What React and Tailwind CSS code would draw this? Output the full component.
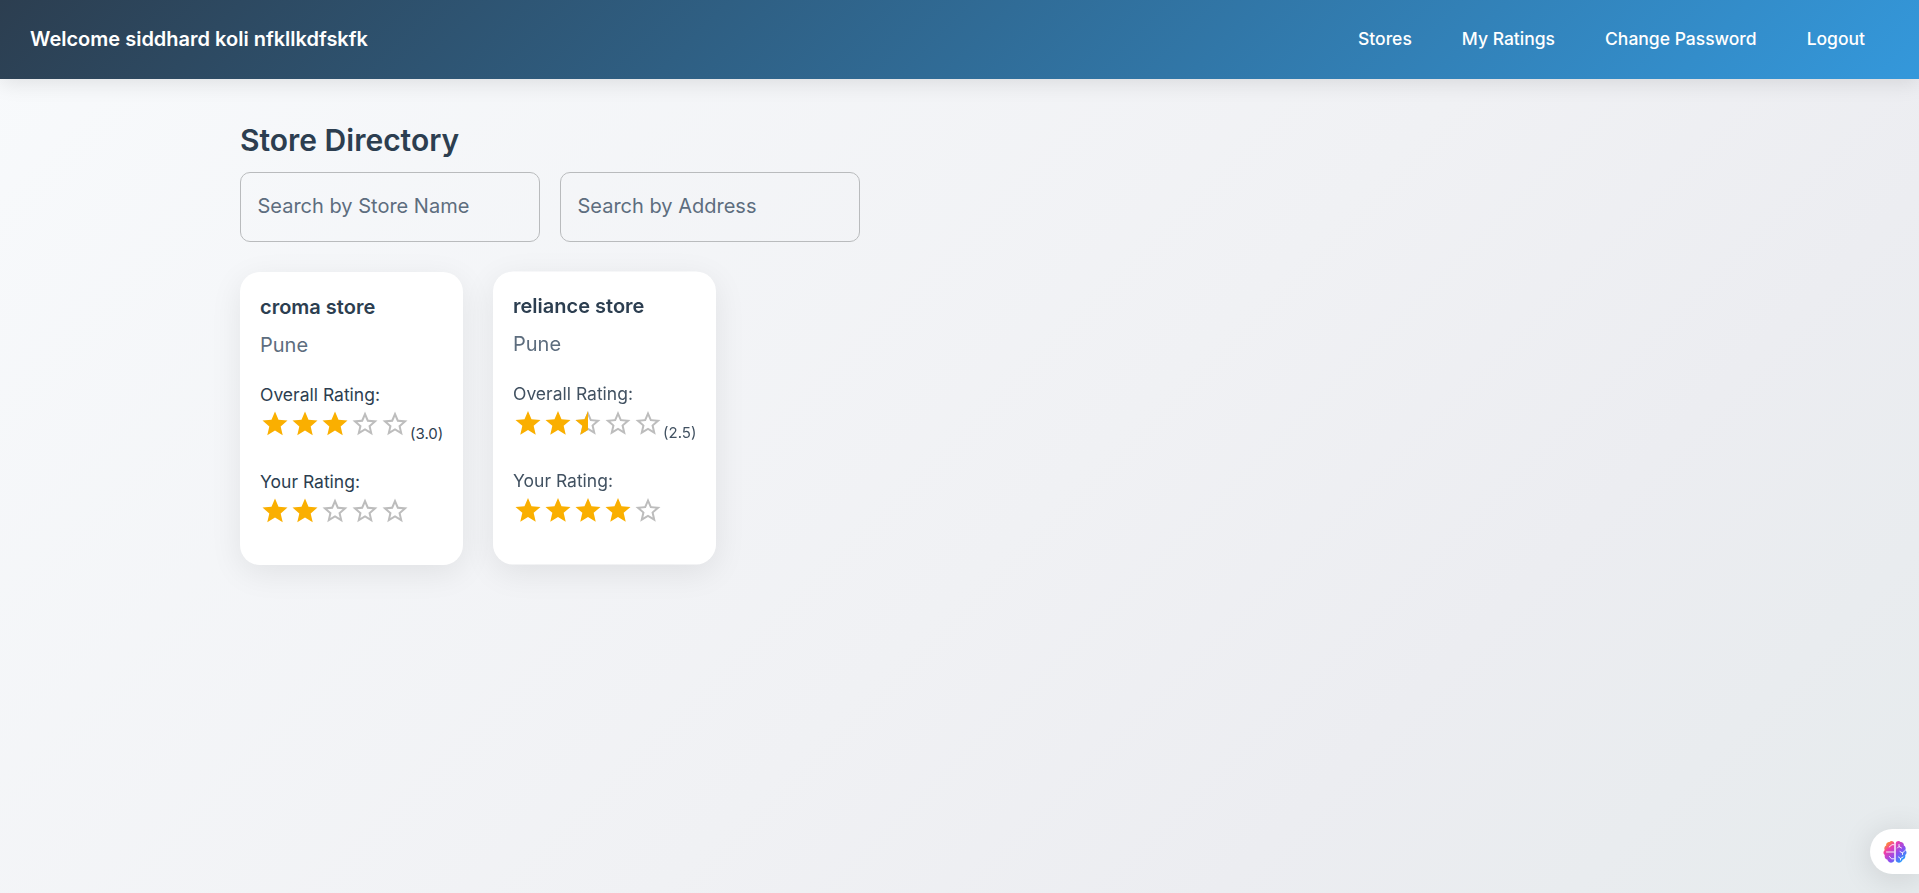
import React from 'react';

const STAR =
  'M12 17.27L18.18 21l-1.64-7.03L22 9.24l-7.19-.61L12 2 9.19 8.63 2 9.24l5.46 4.73L5.82 21z';
const STAR_BORDER =
  'M22 9.24l-7.19-.62L12 2 9.19 8.63 2 9.24l5.46 4.73L5.82 21 12 17.27 18.18 21l-1.63-7.03L22 9.24zM12 15.4l-3.76 2.27 1-4.28-3.32-2.88 4.38-.38L12 6.1l1.71 4.04 4.38.38-3.32 2.88 1 4.28L12 15.4z';

function Star({ fill }) {
  return (
    <svg viewBox="0 0 24 24" className="size-[30px] shrink-0">
      {fill < 1 && <path d={STAR_BORDER} className="fill-[#bdbdbd]" />}
      {fill === 1 && <path d={STAR} className="fill-[#faaf00]" />}
      {fill === 0.5 && (
        <svg x="0" y="0" width="12" height="24" viewBox="0 0 12 24">
          <path d={STAR} className="fill-[#faaf00]" />
        </svg>
      )}
    </svg>
  );
}

function Rating({ value }) {
  return (
    <div className="flex">
      {[0, 1, 2, 3, 4].map((i) => (
        <Star key={i} fill={Math.max(0, Math.min(1, value - i))} />
      ))}
    </div>
  );
}

function StoreCard({ name, city, overall, own, raised }) {
  return (
    <article
      className={`h-[293px] w-[223px] rounded-[20px] bg-white px-5 pt-[19px] shadow-[0_8px_32px_rgba(0,0,0,0.08)] ${
        raised ? '-translate-y-[0.6px] text-[#415161] will-change-transform' : 'text-[#2c3e50]'
      }`}
    >
      <h2 className="text-xl leading-8 font-semibold text-[#2c3e50]">{name}</h2>
      <p className="mt-[7px] text-xl leading-[30px] text-[#5d6d7e]">{city}</p>
      <p className="mt-[22px] text-[17.5px] leading-[26px]">Overall Rating:</p>
      <div className="mt-px flex h-[33px] items-start">
        <Rating value={overall} />
        <span className="mt-[13px] text-[15px] leading-6">({overall.toFixed(1)})</span>
      </div>
      <p className="mt-[27px] text-[17.5px] leading-[26px]">Your Rating:</p>
      <div className="mt-px">
        <Rating value={own} />
      </div>
    </article>
  );
}

function SearchField({ label }) {
  return (
    <input
      placeholder={label}
      className="h-[70px] w-[300px] rounded-[10px] border border-[#b9bbbd] bg-transparent px-[16.5px] pb-0.5 text-xl text-[#2c3e50] placeholder:text-[#5d6d7e]"
    />
  );
}

function BrainIcon() {
  return (
    <svg viewBox="0 0 24 24" className="size-6">
      <defs>
        <linearGradient id="brain" x1="0" y1="0" x2="1" y2="1">
          <stop offset="0.1" stopColor="#ff9a1f" />
          <stop offset="0.3" stopColor="#f03cab" />
          <stop offset="0.6" stopColor="#8b4ff0" />
          <stop offset="0.9" stopColor="#16a5ff" />
        </linearGradient>
      </defs>
      <path
        fill="url(#brain)"
        d="M11.3 3.2C10.8 1 8 .3 6.500 1.900 4.400 1.700 2.800 3.500 3.200 5.400 1.300 6.400.9 8.500 1.700 9.900-.1 11.500.2 13.900 1.800 15 1.200 17.500 2.500 19.200 4.300 19.600 4.800 22.300 8 23.400 9.800 22.200 10.900 21.700 11.300 20.800 11.300 19.800ZM12.700 3.200C13.200 1 16 .3 17.500 1.900 19.600 1.700 21.200 3.500 20.800 5.400 22.700 6.400 23.100 8.500 22.300 9.900 24.100 11.500 23.800 13.900 22.200 15 22.800 17.500 21.500 19.200 19.700 19.600 19.200 22.300 16 23.400 14.200 22.200 13.100 21.700 12.700 20.800 12.700 19.800Z"
      />
      <g fill="none" stroke="#fff" strokeWidth="0.9" strokeLinecap="round">
        <path d="M11 4.700H9L6.200 7M3.500 12H11M11 18.800H8.500L6.500 16.500" />
        <path d="M16 4.500V6.500L18.500 8M16 6.500L14.500 8M17 11.500L19.500 13 22 10.500M19.500 13V14.500M15.500 17L17.500 18.500 20 17M17.500 18.500V20" />
      </g>
    </svg>
  );
}

export default function App() {
  return (
    <div className="flex h-screen flex-col overflow-hidden bg-linear-[135deg,#f8fafc_0%,#f0f1f4_55%,#ecedf1_75%,#e6ebed_100%] font-[Inter,sans-serif] text-[#2c3e50]">
      <header className="flex h-[79px] shrink-0 items-center justify-between bg-linear-[135deg,#2c3e50_0%,#3498db_100%] pr-[54px] pb-0.5 pl-[30px] text-white shadow-[0_4px_20px_rgba(0,0,0,0.1)]">
        <h1 className="text-xl font-semibold">Welcome siddhard koli nfkllkdfskfk</h1>
        <nav className="flex gap-[50px] pt-px text-[17.5px] font-medium">
          <a>Stores</a>
          <a>My Ratings</a>
          <a>Change Password</a>
          <a>Logout</a>
        </nav>
      </header>
      <main className="px-[240px] pt-[39px]">
        <h1 className="text-[30px] leading-[45px] font-semibold">Store Directory</h1>
        <div className="mt-[9px] flex gap-5">
          <SearchField label="Search by Store Name" />
          <SearchField label="Search by Address" />
        </div>
        <div className="mt-[30px] flex gap-[30px]">
          <StoreCard name="croma store" city="Pune" overall={3} own={2} />
          <StoreCard name="reliance store" city="Pune" overall={2.5} own={4} raised />
        </div>
      </main>
      <button
        aria-label="Assistant"
        className="absolute top-[829px] right-0 flex h-[45px] w-[49px] items-center rounded-l-full bg-white pl-[13px] shadow-[0_4px_32px_rgba(0,0,0,0.12)]"
      >
        <BrainIcon />
      </button>
    </div>
  );
}
